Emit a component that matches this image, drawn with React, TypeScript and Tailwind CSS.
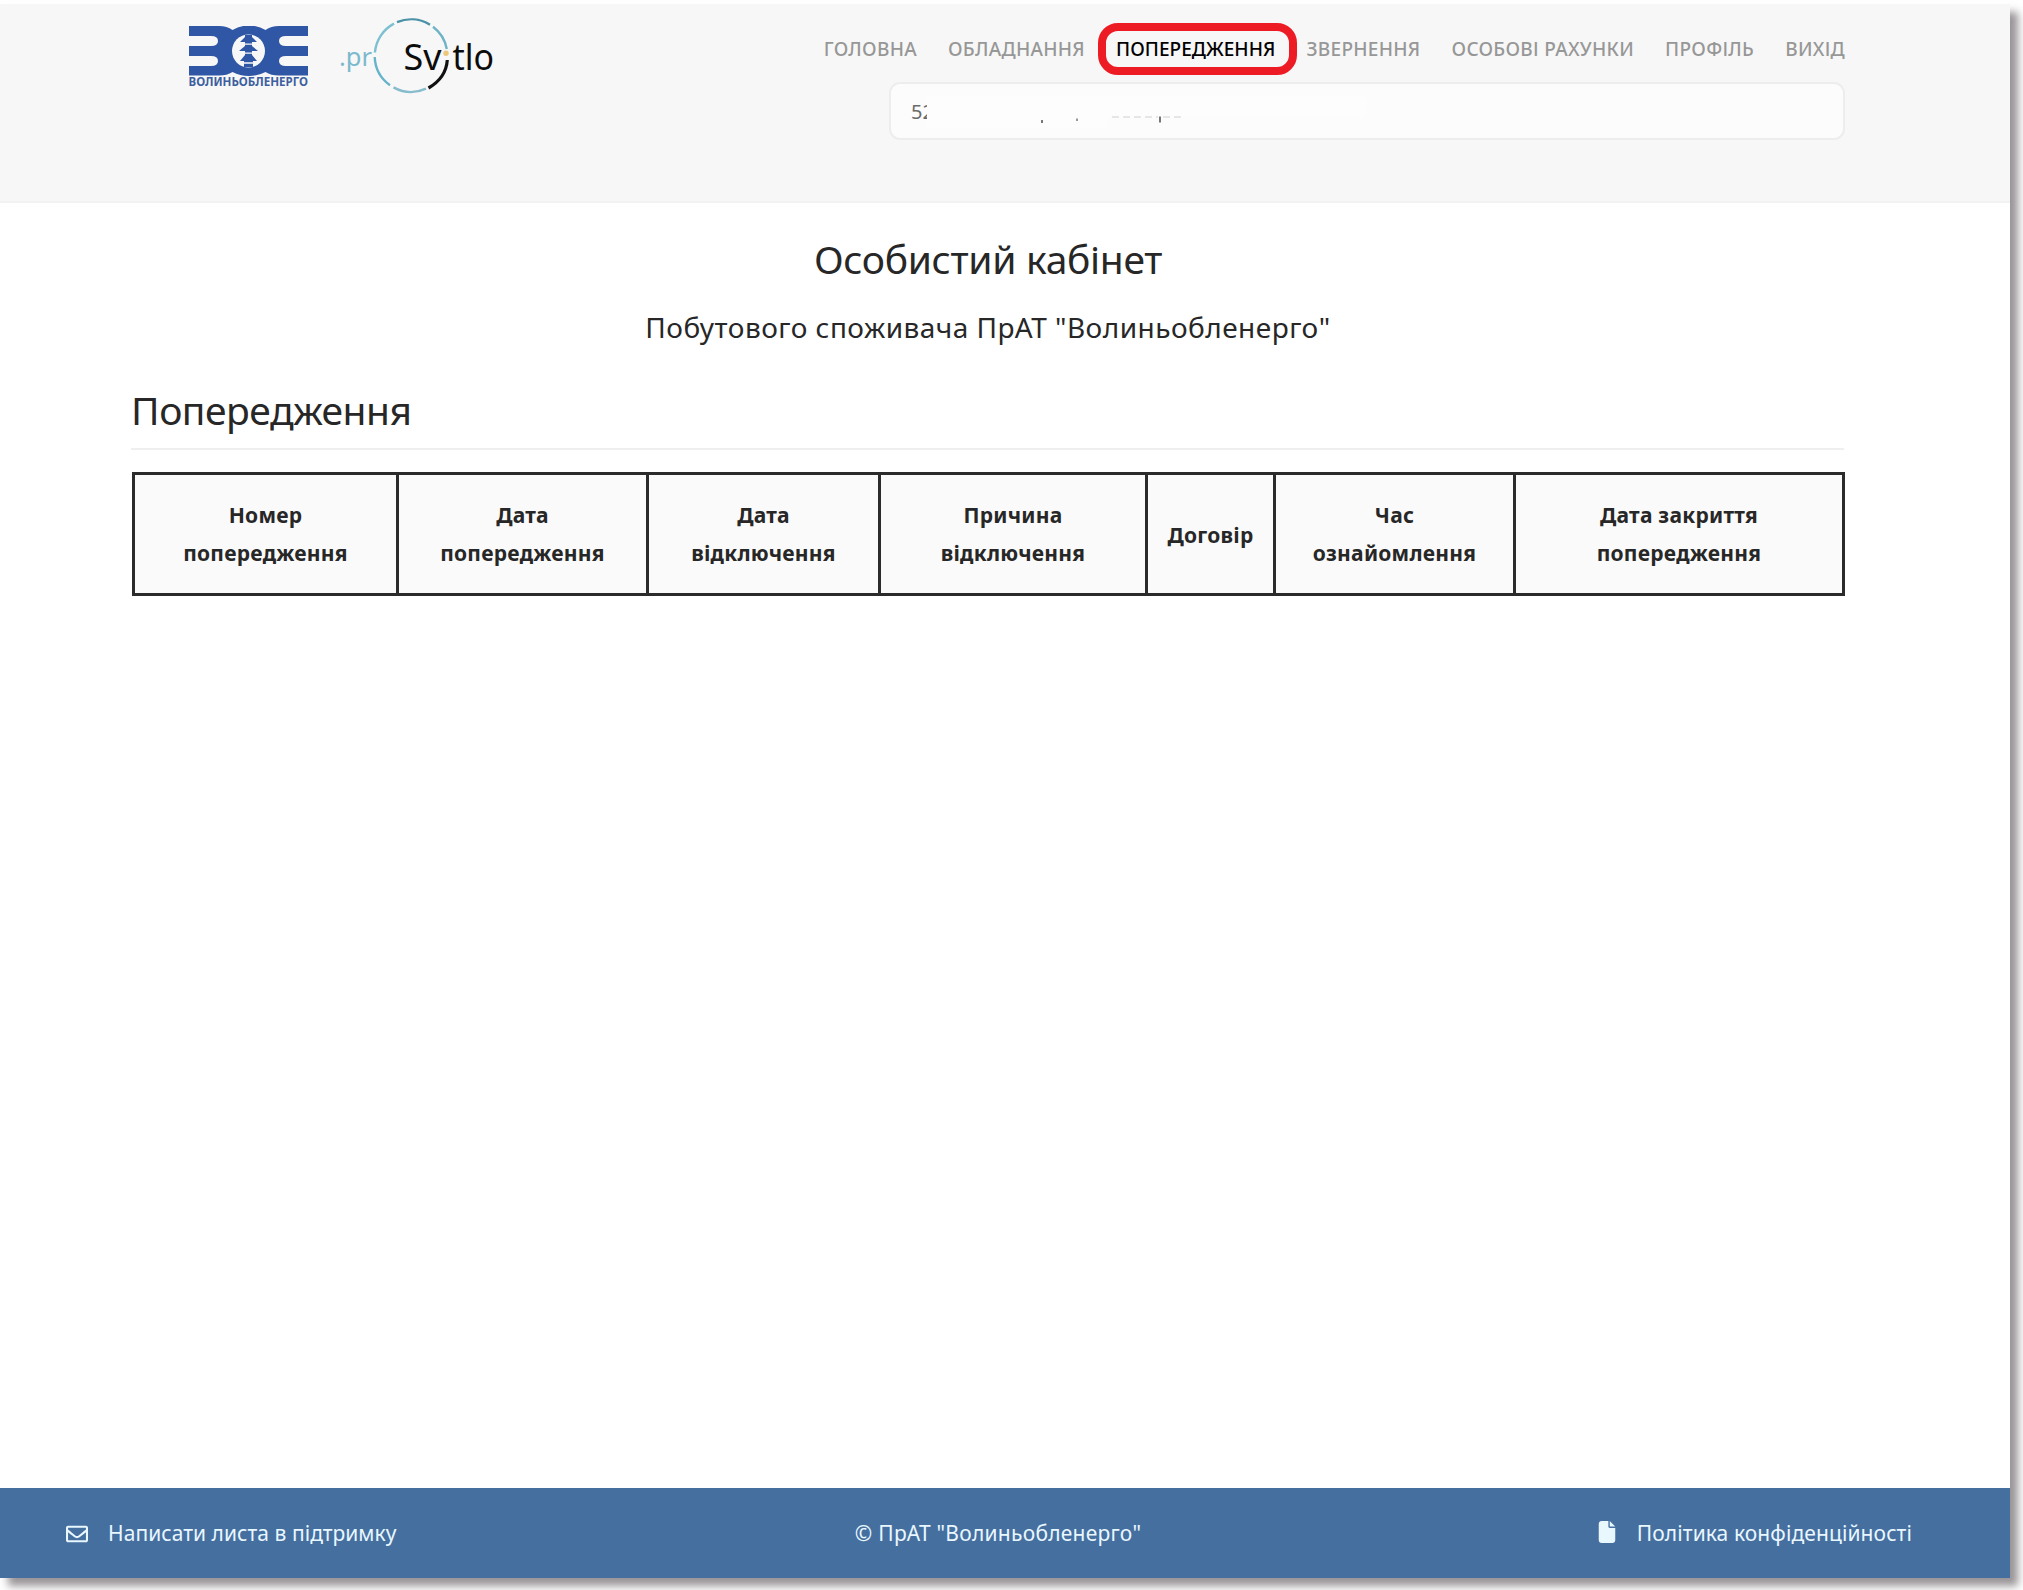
import React from "react";
import { FaRegEnvelope } from "react-icons/fa";
import { FaFile } from "react-icons/fa6";

const navItems = [
  { label: "ГОЛОВНА" },
  { label: "ОБЛАДНАННЯ" },
  { label: "ПОПЕРЕДЖЕННЯ", active: true },
  { label: "ЗВЕРНЕННЯ" },
  { label: "ОСОБОВІ РАХУНКИ" },
  { label: "ПРОФІЛЬ" },
  { label: "ВИХІД" },
];

const columns = [
  { lines: ["Номер", "попередження"], width: "w-[264px]" },
  { lines: ["Дата", "попередження"], width: "w-[250px]" },
  { lines: ["Дата", "відключення"], width: "w-[232px]" },
  { lines: ["Причина", "відключення"], width: "w-[267px]" },
  { lines: ["Договір"], width: "w-[128px]" },
  { lines: ["Час", "ознайомлення"], width: "w-[240px]" },
  { lines: ["Дата закриття", "попередження"], width: "w-[329px]" },
];

function CompanyLogo() {
  return (
    <svg width="120" height="64" viewBox="0 0 120 64" className="block">
      <path
        d="M0 0H30Q38 0 43.500 4Q51 -0.500 60 -0.500Q69 -0.500 76.500 4Q82 0 90 0H119V10H97Q90 10 90 15Q90 20 97 20H119V30H97Q90 30 90 35Q90 40 97 40H119V49.500H90Q82 49.500 76.500 46Q69 50 60 50Q51 50 43.500 46Q38 49.500 30 49.500H0V40H22Q29 40 29 35Q29 30 22 30H0V20H22Q29 20 29 15Q29 10 22 10H0Z"
        fill="#2f57a5"
      />
      <ellipse cx="59.500" cy="25" rx="16.500" ry="16.500" fill="#f7f7f7" />
      <path
        d="M56 9H63V11L68 16H63V20L69 25H63V29L68 35H64V41H55V35H51L56 29V25H50L56 20V16H51L56 11Z"
        fill="#2f57a5"
      />
      <path d="M53 18.200H66M53 27.200H66M54 37H65" stroke="#f7f7f7" strokeWidth="1.300" />
      <text
        x="-0.500"
        y="60"
        textLength="119.500"
        lengthAdjust="spacingAndGlyphs"
        fontSize="11.500"
        fontWeight="700"
        fill="#3d5f9f"
        fontFamily="Noto Sans, sans-serif"
      >
        ВОЛИНЬОБЛЕНЕРГО
      </text>
    </svg>
  );
}

function SvitloLogo() {
  return (
    <svg width="160" height="80" viewBox="0 0 160 80" className="block" fontFamily="Noto Sans, sans-serif">
      <g fill="none" strokeWidth="2.400">
        <path d="M57 7.200A36.300 36.300 0 0 1 90 9.700" stroke="#4b92a6" />
        <path d="M93 11.800A36.300 36.300 0 0 1 106.800 34" stroke="#6fb3c6" />
        <path d="M54 8.600A36.300 36.300 0 0 0 34.900 37.500" stroke="#7cc0d2" />
        <path d="M34.700 42A36.300 36.300 0 0 0 50 70.200" stroke="#67b3c9" />
        <path d="M53.500 72.400A36.300 36.300 0 0 0 86 73.700" stroke="#86bccb" />
        <path d="M107.300 45Q106 63 88.500 73" stroke="#111" strokeWidth="3.200" />
      </g>
      <text x="-1" y="50.500" textLength="33" lengthAdjust="spacingAndGlyphs" fontSize="25" fill="#7cb9cd">
        .pr
      </text>
      <g fontSize="36" fill="#0c0c0c">
        <text x="63.500" y="55" textLength="38" lengthAdjust="spacingAndGlyphs">Sv</text>
        <text x="112.500" y="55" textLength="41.500" lengthAdjust="spacingAndGlyphs">tlo</text>
      </g>
      <circle cx="106" cy="38.300" r="2.700" fill="#ecc77c" />
    </svg>
  );
}

function AccountSelect() {
  return (
    <div className="flex h-[58px] w-[956px] items-center rounded-[11px] border-2 border-[#ededed] bg-[#fcfcfc] pl-[20px] text-[20px] text-[#6b6b6b]">
      <span className="pt-0.5">52</span>
      {/* erased part of the account name */}
      <svg width="440" height="40" viewBox="0 0 440 40" className="relative -ml-[7px] block">
        <path d="M0 6H440V26H180V36H0V28L-1 20Z" fill="#fdfdfd" />
        <path d="M115 29v3" stroke="#777" strokeWidth="2" />
        <path d="M150 27.500v2.500" stroke="#999" strokeWidth="2" />
        <path d="M233 25.500v6" stroke="#777" strokeWidth="2" />
        <path d="M185 26h46M236 26h22" stroke="#cfcfcf" strokeWidth="1.200" strokeDasharray="7 4" />
      </svg>
    </div>
  );
}

export default function App() {
  return (
    <div className="h-[1590px] w-[2023px] overflow-hidden bg-white pt-1 font-['Noto_Sans',sans-serif] text-[#272727]">
      <div className="flex h-[1574px] w-[2010px] flex-col bg-white shadow-[8px_8px_8px_rgba(70,60,65,0.550)]">
        <header className="flex h-[199px] shrink-0 justify-between border-b-2 border-[#f2f2f2] bg-[#f7f7f7] pr-[165px] pl-[189px]">
          <div className="flex items-start gap-[31px]">
            <div className="pt-[22px]">
              <CompanyLogo />
            </div>
            <div className="pt-[11px]">
              <SvitloLogo />
            </div>
          </div>
          <div className="flex flex-col items-end">
            <nav className="flex h-[78px] items-center gap-[31px] pt-[12px] text-[19px] font-medium text-[#979797]">
              {navItems.map((item) => (
                <a
                  key={item.label}
                  className={item.active ? "relative tracking-[0.050px] text-black" : "tracking-[0.300px]"}
                >
                  {item.label}
                  {item.active && (
                    <span className="absolute -top-[12px] -right-[22px] -left-[18px] h-[52px] rounded-[20px] border-8 border-[#ed1c24]" />
                  )}
                </a>
              ))}
            </nav>
            <AccountSelect />
          </div>
        </header>

        <main className="flex-1 pr-[166px] pl-[132px]">
          <h1 className="pt-[28px] text-center text-[39px] leading-[56px] tracking-[-0.300px]">
            Особистий кабінет
          </h1>
          <p className="pt-[14px] text-center text-[28px] leading-[52px] tracking-[0.480px]">
            Побутового споживача ПрАТ "Волиньобленерго"
          </p>
          <h2 className="mt-[35px] -ml-px h-[62px] border-b-2 border-[#efefef] text-[39px] leading-[44px] tracking-[-0.450px]">
            Попередження
          </h2>
          <table className="mt-[22px] w-[1710px] table-fixed border-collapse border-[3px] border-[#2b2b2b] bg-[#fafafa]">
            <thead>
              <tr className="h-[121px]">
                {columns.map((col, i) => (
                  <th
                    key={i}
                    className={`${col.width} border-[3px] border-[#2b2b2b] p-0 text-[21px] leading-[38.500px] font-bold tracking-[0.250px]`}
                  >
                    {col.lines.map((line) => (
                      <div key={line} className={col.lines.length === 1 ? "pt-[3px]" : ""}>
                        {line}
                      </div>
                    ))}
                  </th>
                ))}
              </tr>
            </thead>
          </table>
        </main>

        <footer className="flex h-[90px] shrink-0 items-center justify-between bg-[#456f9f] pt-px pr-[98px] pl-[66px] text-[21px] text-[#e9f7ff]">
          <a className="flex items-center gap-[20px]">
            <FaRegEnvelope size={22} />
            <span className="tracking-[0.050px]">Написати листа в підтримку</span>
          </a>
          <span className="pl-[4px] tracking-[0.250px]">© ПрАТ "Волиньобленерго"</span>
          <a className="flex items-center gap-[19px] tracking-[0.100px]">
            <FaFile size={22} className="mb-1" />
            Політика конфіденційності
          </a>
        </footer>
      </div>
    </div>
  );
}
